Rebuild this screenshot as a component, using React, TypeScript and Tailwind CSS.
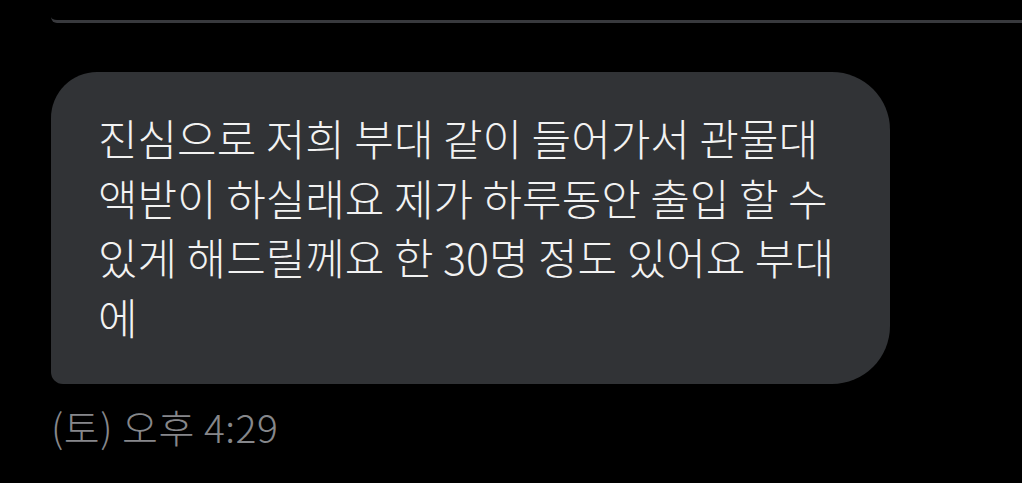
import React from "react";

const font = "font-['Noto_Sans_CJK_KR','Noto_Sans',sans-serif]";

const lines = [
  "진심으로 저희 부대 같이 들어가서 관물대",
  "액받이 하실래요 제가 하루동안 출입 할 수",
  "있게 해드릴께요 한 30명 정도 있어요 부대",
  "에",
];

const App: React.FC = () => {
  return (
    <div className={`w-[1022px] h-[483px] bg-black overflow-hidden ${font}`}>
      <div className="h-[23px] ml-[51px] border-b-[3px] border-[#38393d] rounded-bl-[6px]" />
      <div className="pl-[51px] pt-[49px]">
        <div className="w-[839px] bg-[#313336] rounded-tl-[46px] rounded-r-[58px] rounded-bl-[12px] pl-[47px] pr-[40px] pt-[36px] pb-[38px]">
          {lines.map((line, i) => (
            <p key={i} className="text-[43px] leading-[59.5px] font-light text-[#f2f2f2] whitespace-nowrap">
              {line}
            </p>
          ))}
        </div>
        <div className="mt-[20px] text-[39px] leading-[44px] font-light tracking-[0.5px] text-[#86878b]">(토) 오후 4:29</div>
      </div>
    </div>
  );
};

export default App;
